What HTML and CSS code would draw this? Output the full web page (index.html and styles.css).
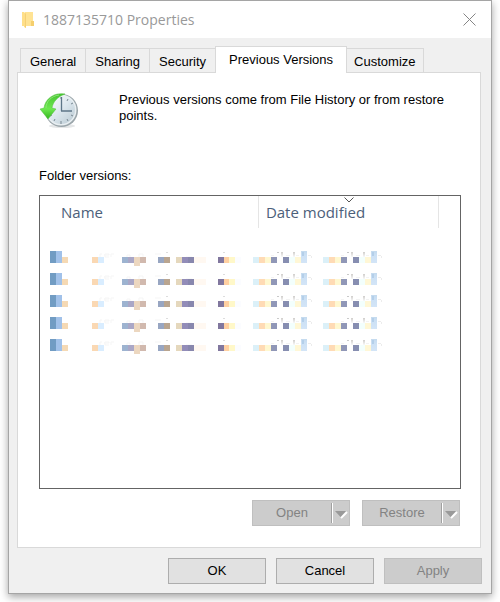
FILE: index.html
```html
<!DOCTYPE html>
<html lang="en">
<head>
<meta charset="utf-8">
<meta name="viewport" content="width=device-width, initial-scale=1">
<title>1887135710 Properties</title>
<link rel="stylesheet" href="styles.css">
</head>
<body>
<svg class="defs" aria-hidden="true">
  <defs>
    <linearGradient id="sky" x1="0" y1="0" x2="0" y2="1"><stop offset="0" stop-color="#c4daee"/><stop offset=".4" stop-color="#cde1f5"/><stop offset="1" stop-color="#d3e5f7"/></linearGradient>
    <linearGradient id="fade" x1="0" y1="0" x2="0" y2="1"><stop offset="0" stop-color="#cfcdcb"/><stop offset="1" stop-color="#fafafa"/></linearGradient>
    <g id="stamp">
      <path fill="#dbf0f8" d="M0 6h6v6H0z"/><path fill="#ffdbb5" d="M6 6h6v6H6z"/><path fill="#fff8d0" d="M12 6h6v6h-6z"/>
      <path fill="#9097b7" d="M18 6h6v6h-6z"/><path fill="#878eb1" d="M30 6h6v6h-6z"/><path fill="#f3fffd" d="M36 6h6v6h-6z"/>
      <path fill="#fff7d6" d="M42 6h6v6h-6z"/><path fill="url(#sky)" d="M48 0h6v12h-6z"/>
      <path fill="#b4cfe9" d="M49 1h2v4h-2z"/>
      <path fill="#c9c9c9" d="M24 1h2v1h-2z"/><path fill="url(#fade)" d="M28 1h2v5h-2zM40 1h2v5h-2z"/>
      <path fill="#f3f3f3" d="M18 4h3v1h-3zM33 4h4v1h-4zM43 4h3v1h-3z"/><path fill="#ececec" d="M55 4h3v1h1v2h-1V5h-3z"/>
    </g>
    <g id="version">
      <path fill="#719cc3" d="M0 0h6v12H0z"/><path fill="#a1c1e9" d="M6 0h6v12H6z"/><path fill="#f5d9b4" d="M12 6h6v6h-6z"/>
      <path fill="#fad8b3" d="M42 6h6v6h-6z"/><path fill="#d9edff" d="M48 6h6v6h-6z"/>
      <path fill="none" stroke="#f5f5f5" d="M50 6V3h2M54 4h5V3h-4v3h4M61 6V3h3M77 7V4h3v3M89 6V3h4v3M105 3h6M136 6h6"/>
      <path fill="#9db3d0" d="M72 6h6v6h-6z"/><path fill="#aaa7c6" d="M78 6h6v6h-6z"/><path fill="#ecd7c0" d="M84 6h6v9h-6z"/><path fill="#d1b9ae" d="M90 6h6v6h-6z"/>
      <path fill="#98a6c2" d="M108 6h6v6h-6z"/><path fill="#b9a590" d="M114 6h6v6h-6z"/><path fill="#e5d8bd" d="M126 6h6v6h-6z"/>
      <path fill="#928cb8" d="M132 6h6v6h-6z"/><path fill="#8887ad" d="M138 6h6v6h-6z"/><path fill="#fff8f1" d="M144 6h12v6h-12z"/>
      <path fill="#81779e" d="M168 6h6v6h-6z"/><path fill="#ffd0a2" d="M174 6h5v6h-5z"/><path fill="#fff8c9" d="M179 6h6v6h-6z"/><path fill="#fbfcff" d="M185 6h6v6h-6z"/>
      <path fill="#ddd" d="M116 1h2v1h-2zM173 1h2v1h-2z"/>
      <use href="#stamp" x="203"/><use href="#stamp" x="273"/>
    </g>
  </defs>
</svg>
<main class="window">
  <header class="titlebar">
    <svg class="folder" width="14" height="18" viewBox="0 0 14 18" aria-hidden="true">
      <path fill="#ffe394" d="M4 1h8v9h1v5H4z"/><path fill="#f5cf6e" d="M10 10h3v5h-3z"/><path fill="#ffdf89" d="M1 1h2l2 2v14l-2-1v-1H1z"/><path fill="#f5d075" d="M4 2l1 1v14l-1-1z"/>
    </svg>
    <h1>1887135710 Properties</h1>
    <button class="close" aria-label="Close"><svg width="13" height="13" viewBox="0 0 13 13"><path d="M.5.5l12 12M12.5.5l-12 12" fill="none" stroke="#858585"/></svg></button>
  </header>
  <div class="sheet">
    <div class="tabs" role="tablist">
      <button class="tab" role="tab">General</button>
      <button class="tab" role="tab">Sharing</button>
      <button class="tab" role="tab">Security</button>
      <button class="tab selected" role="tab" aria-selected="true">Previous Versions</button>
      <button class="tab" role="tab">Customize</button>
    </div>
    <section class="panel">
      <div class="intro">
        <svg width="42" height="38" viewBox="0 0 42 38" aria-hidden="true">
          <defs>
            <linearGradient id="dial" x1="0" y1="0" x2="1" y2="1"><stop offset="0" stop-color="#fff"/><stop offset=".5" stop-color="#dce7ee"/><stop offset="1" stop-color="#b9c9d2"/></linearGradient>
            <linearGradient id="leaf" x1="0" y1="0" x2="0" y2="1"><stop offset="0" stop-color="#46c431"/><stop offset=".6" stop-color="#6de84f"/><stop offset="1" stop-color="#35b51f"/></linearGradient>
          </defs>
          <ellipse cx="23" cy="35" rx="13" ry="2" fill="#e4e6e7"/>
          <circle cx="22.500" cy="19.500" r="16.500" fill="#9aa5aa"/><circle cx="22" cy="19" r="15.500" fill="#e9eff2"/><circle cx="22" cy="19" r="14" fill="url(#dial)"/>
          <path d="M22 6v2M22 30v3M29 8l-1 2M34 12l-2 1M34 25l-2-1M29 30l-1-2M15 30l1-2M11 25l2-1" stroke="#7a8993" fill="none"/>
          <path d="M22.500 6v14M22 20h11" stroke="#5d7688" stroke-width="1.300" fill="none"/>
          <path d="M26 3C15 1 6 8 5 17l-4 1 8 10 8-10-4-1c1-6 5-11 13-14z" fill="url(#leaf)" stroke="#4fbf3c" stroke-width=".5"/>
          <path d="M20 4C12 5 7 11 7 17" stroke="#8be574" fill="none"/>
        </svg>
        <p>Previous versions come from File History or from restore points.</p>
      </div>
      <h2 id="versions">Folder versions:</h2>
      <div class="list">
        <table aria-labelledby="versions">
          <colgroup><col class="name"><col class="date"><col></colgroup>
          <thead><tr><th scope="col">Name</th><th scope="col" class="modified"><svg class="sort" width="10" height="6" viewBox="0 0 10 6" aria-hidden="true"><path d="M.5.5L5 5 9.500.5" fill="none" stroke="#555"/></svg>Date modified</th><td></td></tr></thead>
          <tbody>
            <tr><td colspan="3"><svg width="340" height="16"><use href="#version"/></svg></td></tr>
            <tr><td colspan="3"><svg width="340" height="16"><use href="#version"/></svg></td></tr>
            <tr><td colspan="3"><svg width="340" height="16"><use href="#version"/></svg></td></tr>
            <tr><td colspan="3"><svg width="340" height="16"><use href="#version"/></svg></td></tr>
            <tr><td colspan="3"><svg width="340" height="16"><use href="#version"/></svg></td></tr>
          </tbody>
        </table>
      </div>
      <div class="actions">
        <button class="btn split" disabled><span>Open</span><svg width="18" height="20" viewBox="0 0 18 20" aria-hidden="true"><path d="M.5 0v20" stroke="#a0a0a0"/><path d="M1.500 0v20" stroke="#fff"/><path d="M10 15l6-6" stroke="#fff" stroke-width="2"/><path d="M4 8h11l-5.500 6z" fill="#999"/></svg></button>
        <button class="btn split" disabled><span>Restore</span><svg width="18" height="20" viewBox="0 0 18 20" aria-hidden="true"><path d="M.5 0v20" stroke="#a0a0a0"/><path d="M1.500 0v20" stroke="#fff"/><path d="M10 15l6-6" stroke="#fff" stroke-width="2"/><path d="M4 8h11l-5.500 6z" fill="#999"/></svg></button>
      </div>
    </section>
    <footer class="footer">
      <button class="btn">OK</button>
      <button class="btn">Cancel</button>
      <button class="btn" disabled>Apply</button>
    </footer>
  </div>
</main>
</body>
</html>
```
FILE: styles.css
```css
* { box-sizing: border-box; }
body {
  margin: 0;
  padding: 0 8px 8px;
  background: #fff;
  color: #000;
  font: 13px/16px "Liberation Sans", Arial, sans-serif;
}
button { font: inherit; color: inherit; }
svg { display: block; flex: none; }
h1, h2, p { margin: 0; font-weight: normal; }
.defs { position: absolute; width: 0; height: 0; }
.window {
  border: 1px solid #a5a5a5;
  background: #f0f0f0;
  box-shadow: 0 3px 8px rgba(0, 0, 0, .36);
}
.titlebar {
  display: flex;
  align-items: center;
  height: 37px;
  padding: 0 15px 0 12px;
  background: #fff;
}
.titlebar h1 {
  flex: 1;
  margin-left: 8px;
  color: #999;
  font: 14px/20px "Open Sans", "Noto Sans", sans-serif;
}
.close { padding: 0; border: 0; background: none; }
.sheet { padding: 8px 8px 9px; }
.tabs { display: flex; align-items: flex-end; padding-left: 3px; }
.tab {
  height: 24px;
  padding: 3px 9px 0;
  margin-right: -1px;
  border: 1px solid #d9d9d9;
  border-bottom: 0;
  background: #f0f0f0;
  white-space: nowrap;
}
.tab:last-child { padding: 3px 7px 0; }
.tab.selected {
  position: relative;
  height: 27px;
  padding: 0 13px 1px;
  margin-bottom: -1px;
  background: #fff;
}
.panel {
  margin-right: 2px;
  padding: 18px 19px 21px 21px;
  border: 1px solid #d9d9d9;
  background: #fff;
}
.intro { display: flex; gap: 38px; }
.intro p { flex: 1; padding-top: 1px; }
h2 { margin: 39px 0 11px; font-size: 13px; line-height: 16px; }
.list { min-height: 294px; border: 1px solid #646464; }
table { width: 100%; table-layout: fixed; border-collapse: collapse; }
.name { width: 52%; }
.date { width: 43%; }
th, td { padding: 0; }
th {
  height: 32px;
  padding: 0 7px;
  border-right: 1px solid #e5e5e5;
  color: #4c607a;
  font: 15px/20px "Open Sans", "Noto Sans", sans-serif;
  text-align: left;
}
th:first-child { padding-left: 21px; }
.modified { position: relative; }
.sort { position: absolute; top: 1px; left: calc(50% - 5px); }
tbody td { height: 22px; padding-left: 10px; }
tbody::before { content: ""; display: block; height: 20px; }
.actions { display: flex; justify-content: flex-end; gap: 12px; margin: 11px 1px 0 0; }
.btn {
  width: 98px;
  height: 26px;
  padding: 0;
  border: 1px solid #adadad;
  background: #e1e1e1;
}
.btn:disabled { border-color: #bfbfbf; background: #ccc; color: #838383; }
.split { display: flex; align-items: center; }
.split span { flex: 1; }
.footer { display: flex; justify-content: flex-end; gap: 10px; margin: 10px 1px 0 0; }
```
